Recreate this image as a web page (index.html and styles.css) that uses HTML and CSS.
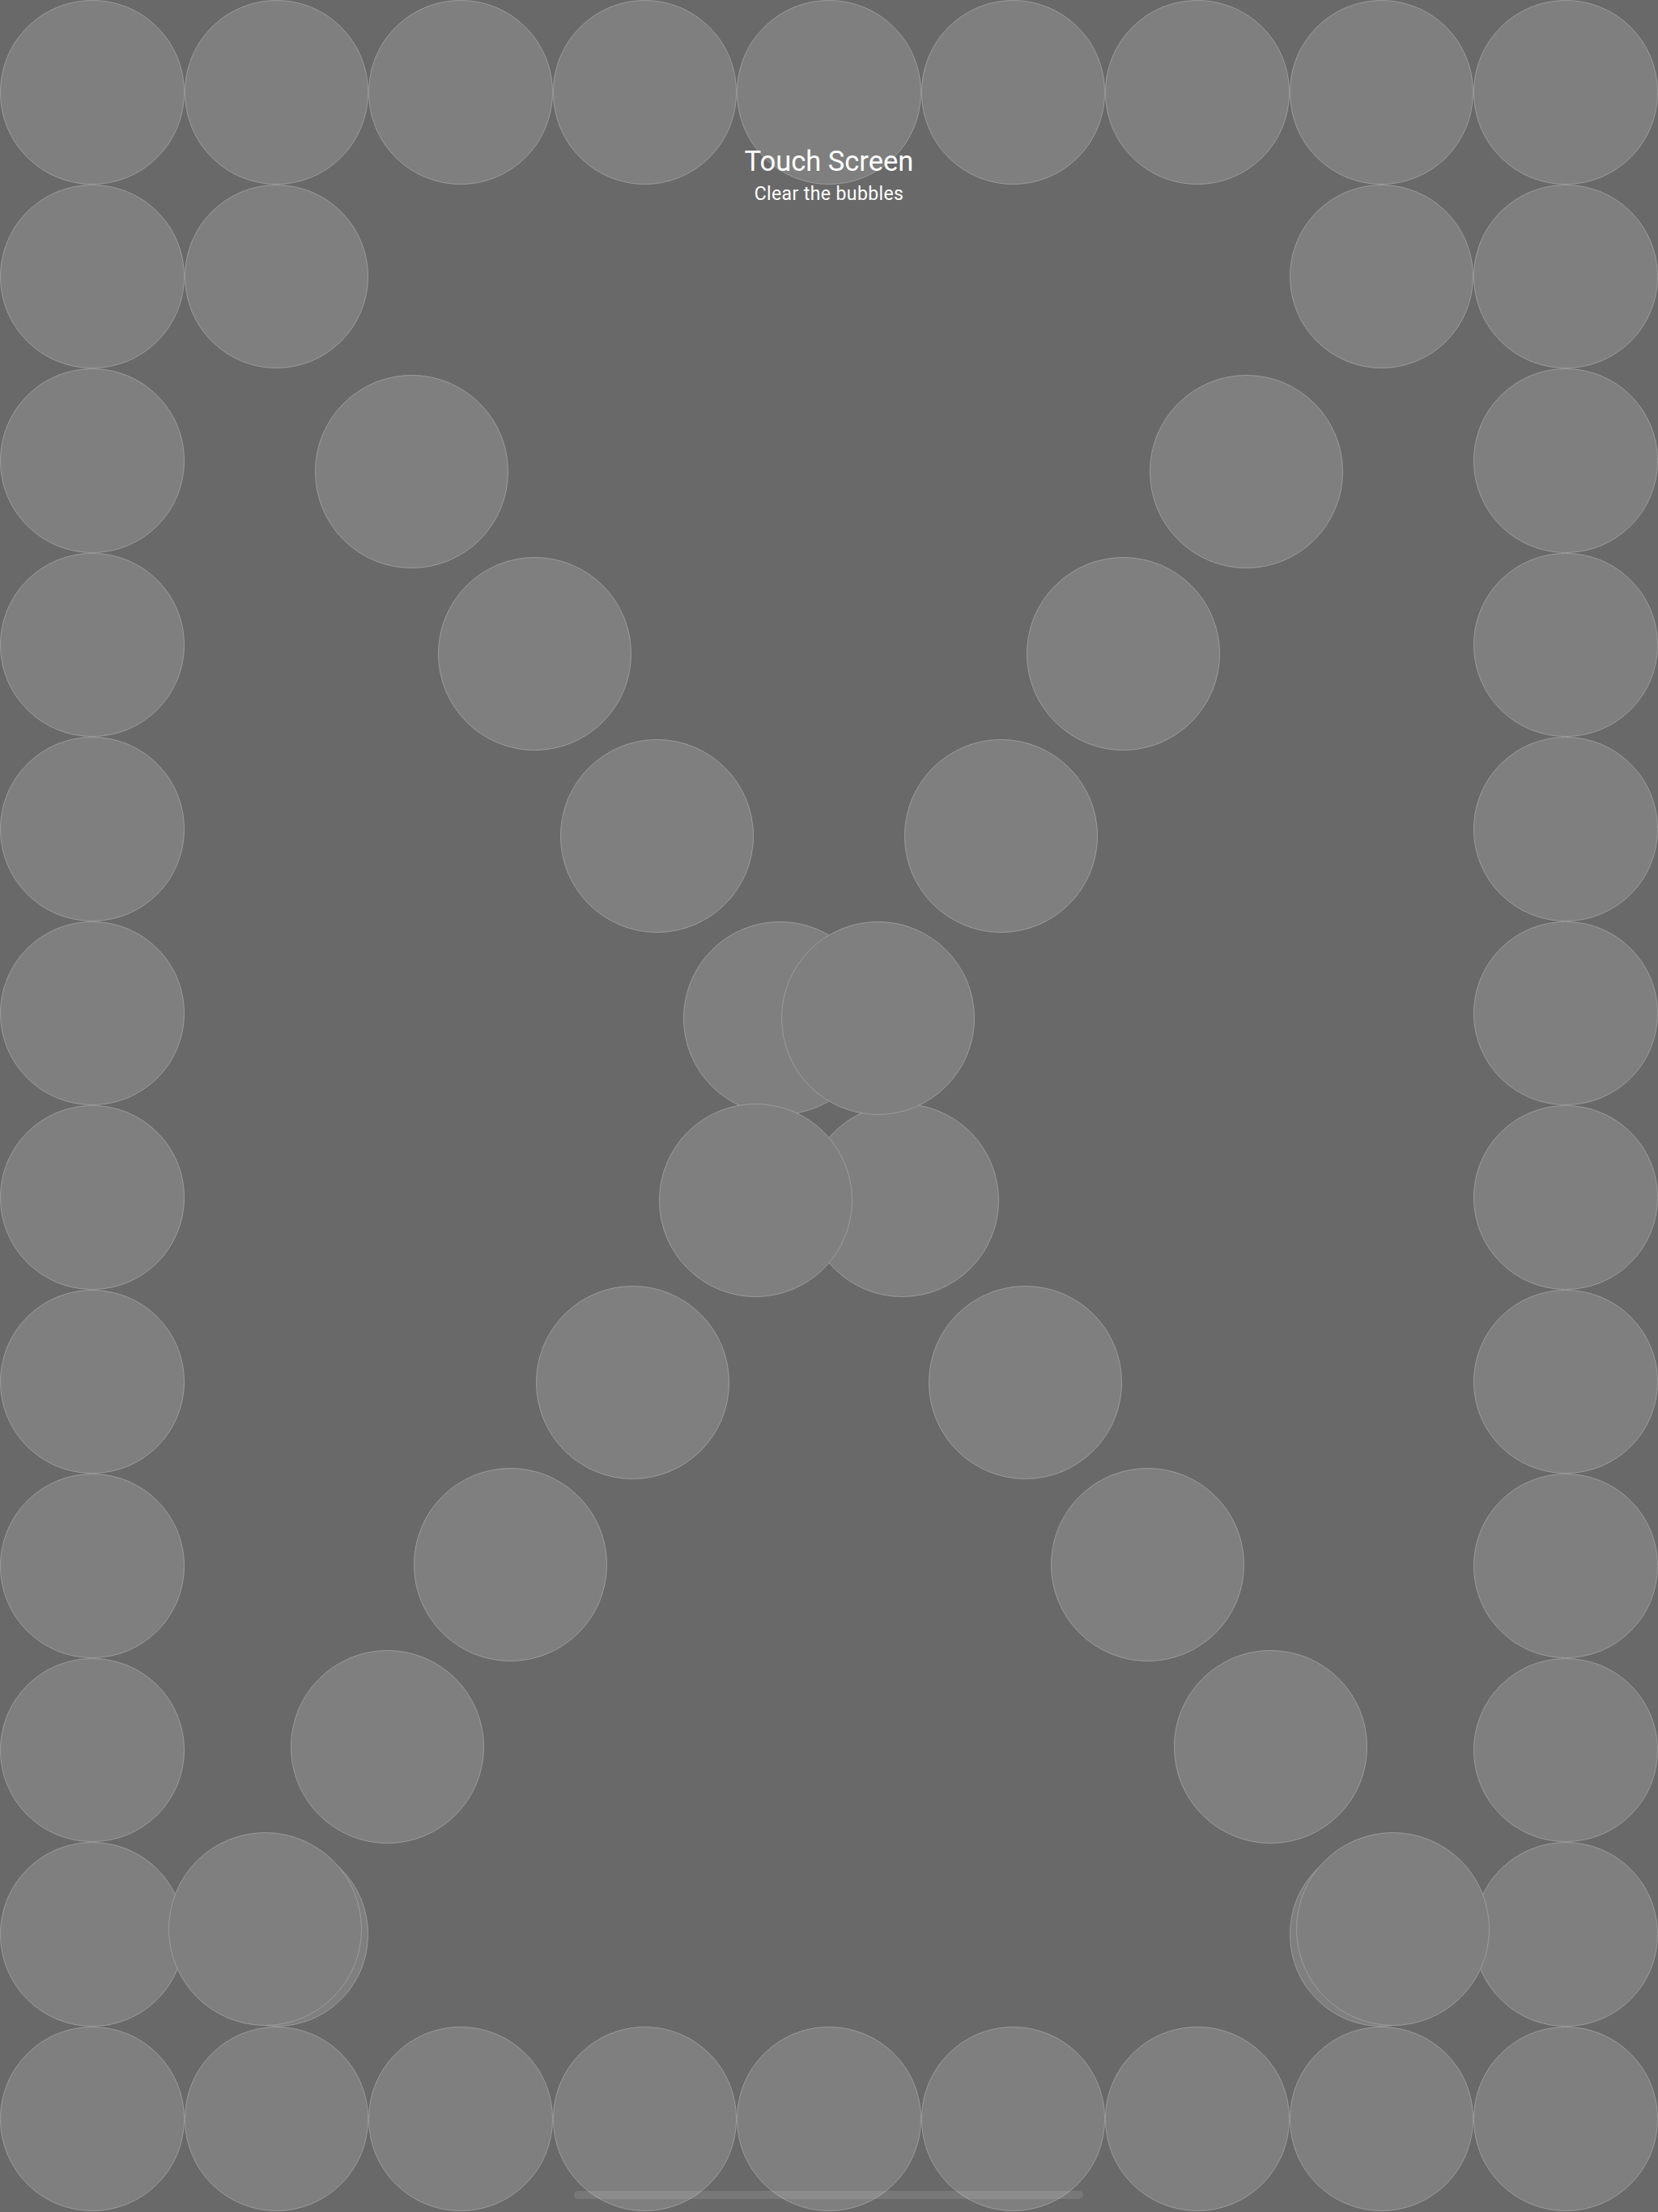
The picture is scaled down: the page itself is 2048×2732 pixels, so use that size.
FILE: index.html
```html
<!DOCTYPE html>
<html lang="en">
<head>
<meta charset="utf-8">
<title>Touch Screen</title>
<link rel="stylesheet" href="styles.css">
</head>
<body>
<main class="screen">
  <div class="ring">
    <div class="bubble" style="grid-area:1/1"></div>
    <div class="bubble" style="grid-area:1/2"></div>
    <div class="bubble" style="grid-area:1/3"></div>
    <div class="bubble" style="grid-area:1/4"></div>
    <div class="bubble" style="grid-area:1/5"></div>
    <div class="bubble" style="grid-area:1/6"></div>
    <div class="bubble" style="grid-area:1/7"></div>
    <div class="bubble" style="grid-area:1/8"></div>
    <div class="bubble" style="grid-area:1/9"></div>
    <div class="bubble" style="grid-area:2/1"></div>
    <div class="bubble" style="grid-area:2/2"></div>
    <div class="bubble" style="grid-area:2/8"></div>
    <div class="bubble" style="grid-area:2/9"></div>
    <div class="bubble" style="grid-area:3/1"></div>
    <div class="bubble" style="grid-area:3/9"></div>
    <div class="bubble" style="grid-area:4/1"></div>
    <div class="bubble" style="grid-area:4/9"></div>
    <div class="bubble" style="grid-area:5/1"></div>
    <div class="bubble" style="grid-area:5/9"></div>
    <div class="bubble" style="grid-area:6/1"></div>
    <div class="bubble" style="grid-area:6/9"></div>
    <div class="bubble" style="grid-area:7/1"></div>
    <div class="bubble" style="grid-area:7/9"></div>
    <div class="bubble" style="grid-area:8/1"></div>
    <div class="bubble" style="grid-area:8/9"></div>
    <div class="bubble" style="grid-area:9/1"></div>
    <div class="bubble" style="grid-area:9/9"></div>
    <div class="bubble" style="grid-area:10/1"></div>
    <div class="bubble" style="grid-area:10/9"></div>
    <div class="bubble" style="grid-area:11/1"></div>
    <div class="bubble" style="grid-area:11/2"></div>
    <div class="bubble" style="grid-area:11/8"></div>
    <div class="bubble" style="grid-area:11/9"></div>
    <div class="bubble" style="grid-area:12/1"></div>
    <div class="bubble" style="grid-area:12/2"></div>
    <div class="bubble" style="grid-area:12/3"></div>
    <div class="bubble" style="grid-area:12/4"></div>
    <div class="bubble" style="grid-area:12/5"></div>
    <div class="bubble" style="grid-area:12/6"></div>
    <div class="bubble" style="grid-area:12/7"></div>
    <div class="bubble" style="grid-area:12/8"></div>
    <div class="bubble" style="grid-area:12/9"></div>
  </div>

  <div class="cross">
    <div class="bubble big" style="left:389.3px;top:462.7px"></div>
    <div class="bubble big" style="left:540.8px;top:687.8px"></div>
    <div class="bubble big" style="left:692.3px;top:912.8px"></div>
    <div class="bubble big" style="left:843.8px;top:1137.9px"></div>
    <div class="bubble big" style="left:995.3px;top:1362.9px"></div>
    <div class="bubble big" style="left:1146.8px;top:1588px"></div>
    <div class="bubble big" style="left:1298.3px;top:1813.1px"></div>
    <div class="bubble big" style="left:1449.8px;top:2038.1px"></div>
    <div class="bubble big" style="left:1601.3px;top:2263.2px"></div>

    <div class="bubble big" style="left:1419.7px;top:462.7px"></div>
    <div class="bubble big" style="left:1268.2px;top:687.8px"></div>
    <div class="bubble big" style="left:1116.7px;top:912.8px"></div>
    <div class="bubble big" style="left:965.2px;top:1137.9px"></div>
    <div class="bubble big" style="left:813.7px;top:1362.9px"></div>
    <div class="bubble big" style="left:662.2px;top:1588px"></div>
    <div class="bubble big" style="left:510.7px;top:1813.1px"></div>
    <div class="bubble big" style="left:359.2px;top:2038.1px"></div>
    <div class="bubble big" style="left:207.7px;top:2263.2px"></div>
  </div>

  <header class="heading">
    <h1 class="title">Touch Screen</h1>
    <p class="subtitle">Clear the bubbles</p>
  </header>

  <div class="home-indicator"></div>
</main>
</body>
</html>
```

FILE: styles.css
```css
* {
  box-sizing: border-box;
}

html, body {
  margin: 0;
  padding: 0;
  background: #696969;
}

.screen {
  position: relative;
  width: 2048px;
  height: 2732px;
  overflow: hidden;
  background: #696969;
  font-family: Roboto, "Noto Sans", "Liberation Sans", sans-serif;
}

.ring {
  display: grid;
  grid-template-columns: repeat(9, 227.56px);
  grid-template-rows: repeat(12, 227.56px);
}

.bubble {
  border-radius: 50%;
  background: #7f7f7f;
  border: 1.5px solid #9b9b9b;
}

.cross {
  position: absolute;
  inset: 0;
}

.bubble.big {
  position: absolute;
  width: 239px;
  height: 239px;
}

.heading {
  position: absolute;
  top: 177px;
  left: 0;
  right: 0;
  display: flex;
  flex-direction: column;
  align-items: center;
  gap: 4px;
  color: #ffffff;
  text-align: center;
}

.title {
  margin: 0;
  font-size: 34.5px;
  line-height: 44px;
  font-weight: 400;
}

.subtitle {
  margin: 0;
  font-size: 23px;
  line-height: 30px;
  font-weight: 400;
  letter-spacing: 0.4px;
}

.home-indicator {
  position: absolute;
  left: 709px;
  top: 2706px;
  width: 629px;
  height: 10px;
  border-radius: 5px;
  background: rgba(255, 255, 255, 0.1);
}
```
